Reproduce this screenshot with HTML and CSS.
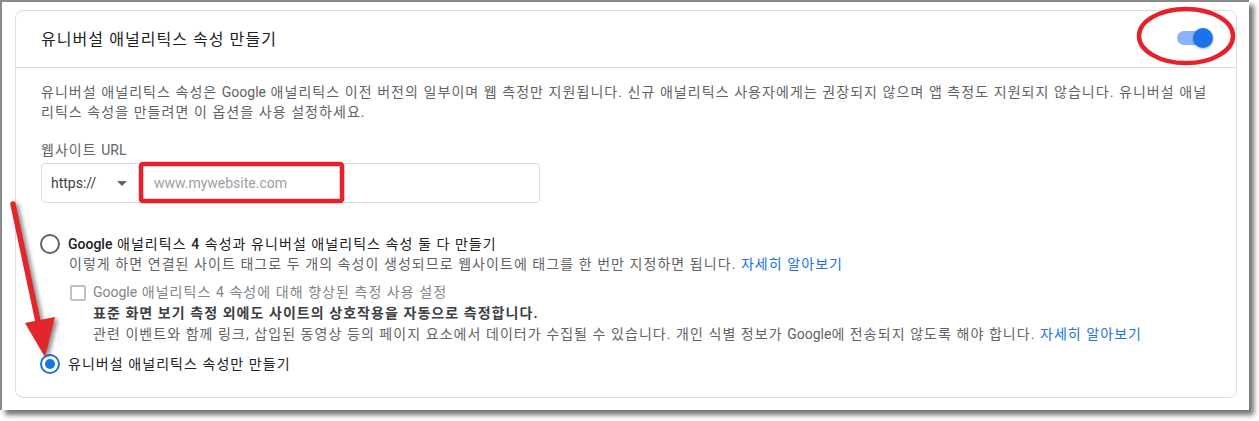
FILE: index.html
```html
<!DOCTYPE html>
<html lang="ko">
<head>
<meta charset="utf-8">
<link rel="stylesheet" href="styles.css">
</head>
<body>
<div class="frame">
  <div class="card">
    <div class="card-header">
      <h2 class="title">유니버설 애널리틱스 속성 만들기</h2>
      <div class="toggle"><span class="track"></span><span class="knob"></span></div>
    </div>
    <div class="card-body">
      <p class="desc">유니버설 애널리틱스 속성은 <span class="en">Google</span> 애널리틱스 이전 버전의 일부이며 웹 측정만 지원됩니다. 신규 애널리틱스 사용자에게는 권장되지 않으며 앱 측정도 지원되지 않습니다. 유니버설 애널<br>리틱스 속성을 만들려면 이 옵션을 사용 설정하세요.</p>
      <div class="field-label">웹사이트 <span class="en">URL</span></div>
      <div class="url-input">
        <div class="select"><span>https://</span><svg class="caret" width="10" height="5" viewBox="0 0 10 5"><path d="M0 0h10L5 5z" fill="#5f6368"/></svg></div>
        <div class="input">www.mywebsite.com</div>
      </div>
      <div class="option first">
        <span class="radio"></span>
        <div class="opt-text">
          <div class="opt-title"><span class="latin en">Google</span> 애널리틱스 <span class="latin">4</span> 속성과 유니버설 애널리틱스 속성 둘 다 만들기</div>
          <div class="opt-sub">이렇게 하면 연결된 사이트 태그로 두 개의 속성이 생성되므로 웹사이트에 태그를 한 번만 지정하면 됩니다. <a class="link">자세히 알아보기</a></div>
        </div>
      </div>
      <div class="sub-option">
        <span class="checkbox"></span>
        <div class="cb-text">
          <div class="cb-title"><span class="en">Google</span> 애널리틱스 4 속성에 대해 향상된 측정 사용 설정</div>
          <div class="cb-bold">표준 화면 보기 측정 외에도 사이트의 상호작용을 자동으로 측정합니다.</div>
          <div class="cb-sub">관련 이벤트와 함께 링크, 삽입된 동영상 등의 페이지 요소에서 데이터가 수집될 수 있습니다. 개인 식별 정보가 <span class="en">Google</span>에 전송되지 않도록 해야 합니다. <a class="link">자세히 알아보기</a></div>
        </div>
      </div>
      <div class="option second">
        <span class="radio checked"></span>
        <div class="opt-text">
          <div class="opt-title">유니버설 애널리틱스 속성만 만들기</div>
        </div>
      </div>
    </div>
  </div>
  <svg class="annot" width="1259" height="421" viewBox="0 0 1259 421">
    <ellipse cx="1186" cy="36" rx="47" ry="27" fill="none" stroke="#e8202a" stroke-width="4.5"/>
    <rect x="141" y="164" width="201" height="37" rx="2" fill="none" stroke="#e8202a" stroke-width="4.5"/>
    <g class="arrow">
      <path d="M13 204 L39 326" stroke="#e3262b" stroke-width="5.5" stroke-linecap="round" fill="none"/>
      <polygon points="25,323 55,317 45,357" fill="#e3262b"/>
    </g>
  </svg>
</div>
</body>
</html>
```
FILE: styles.css
```css
* { box-sizing: border-box; }
html, body { margin: 0; padding: 0; background: #ffffff; }
body {
  font-family: Roboto, "Noto Sans CJK KR", sans-serif;
  width: 1259px;
  height: 421px;
  overflow: hidden;
}
.frame {
  position: relative;
  width: 1249px;
  height: 410px;
  background: #ffffff;
  border-top: 2px solid #8a8a8a;
  border-left: 2px solid #8a8a8a;
  box-shadow: 5px 5px 5px rgba(0,0,0,0.55);
  padding: 8px 0 0 13px;
}
.card {
  width: 1222px;
  height: 388px;
  border: 1px solid #dadce0;
  border-radius: 8px;
  background: #fff;
  letter-spacing: 0.066em;
}
.en { letter-spacing: 0; }
.card-header {
  height: 57px;
  border-bottom: 1px solid #dadce0;
  display: flex;
  align-items: center;
  justify-content: space-between;
  padding: 0 23px 2px 25px;
}
.title {
  margin: 0;
  font-size: 16px;
  font-weight: 400;
  color: #202124;
}
.toggle {
  position: relative;
  width: 36px;
  height: 20px;
  display: flex;
  align-items: center;
}
.track {
  display: block;
  width: 34px;
  height: 14px;
  border-radius: 7px;
  background: #8ab4f8;
}
.knob {
  position: absolute;
  right: 0;
  top: 0;
  width: 20px;
  height: 20px;
  border-radius: 50%;
  background: #1a73e8;
  box-shadow: 0 1px 3px rgba(0,0,0,0.3);
}
.card-body {
  padding: 14px 25px 0 25px;
  font-size: 14px;
  line-height: 20px;
  color: #5f6368;
}
.desc {
  margin: 0;
  white-space: nowrap;
}
.field-label {
  margin-top: 18px;
  color: #5f6368;
}
.url-input {
  margin-top: 3px;
  width: 499px;
  height: 40px;
  border: 1px solid #dadce0;
  border-radius: 4px;
  display: flex;
  letter-spacing: 0;
}
.select {
  width: 98px;
  border-right: 1px solid #dadce0;
  display: flex;
  align-items: center;
  padding-left: 9px;
  color: #3c4043;
}
.select .caret { margin-left: 21px; }
.input {
  display: flex;
  align-items: center;
  padding-left: 14px;
  color: #9aa0a6;
}
.option {
  display: flex;
  align-items: flex-start;
}
.option.first { margin-top: 31px; }
.option.second { margin-top: 9px; }
.radio {
  flex: none;
  width: 20px;
  height: 20px;
  margin-left: -1px;
  margin-right: 8px;
  border: 2px solid #5f6368;
  border-radius: 50%;
  display: flex;
  align-items: center;
  justify-content: center;
}
.radio.checked { border-color: #1a73e8; }
.radio.checked::after {
  content: "";
  width: 10px;
  height: 10px;
  border-radius: 50%;
  background: #1a73e8;
}
.opt-title { color: #202124; white-space: nowrap; }
.opt-title .latin { font-weight: 500; }
.opt-sub { white-space: nowrap; padding-left: 1px; }
.link { color: #1a73e8; text-decoration: none; }
.sub-option {
  display: flex;
  align-items: flex-start;
  margin-top: 8px;
  margin-left: 29px;
  line-height: 21px;
}
.checkbox {
  flex: none;
  width: 16px;
  height: 16px;
  margin-top: 3px;
  margin-right: 7px;
  border: 2px solid #bdc1c6;
  border-radius: 2px;
}
.cb-title { color: #80868b; white-space: nowrap; }
.cb-bold { color: #3c4043; font-weight: 700; white-space: nowrap; }
.cb-sub { white-space: nowrap; }
.annot {
  position: absolute;
  left: -2px;
  top: -2px;
  pointer-events: none;
  overflow: visible;
}
.arrow { filter: drop-shadow(3px 2px 2px rgba(0,0,0,0.45)); }
```
